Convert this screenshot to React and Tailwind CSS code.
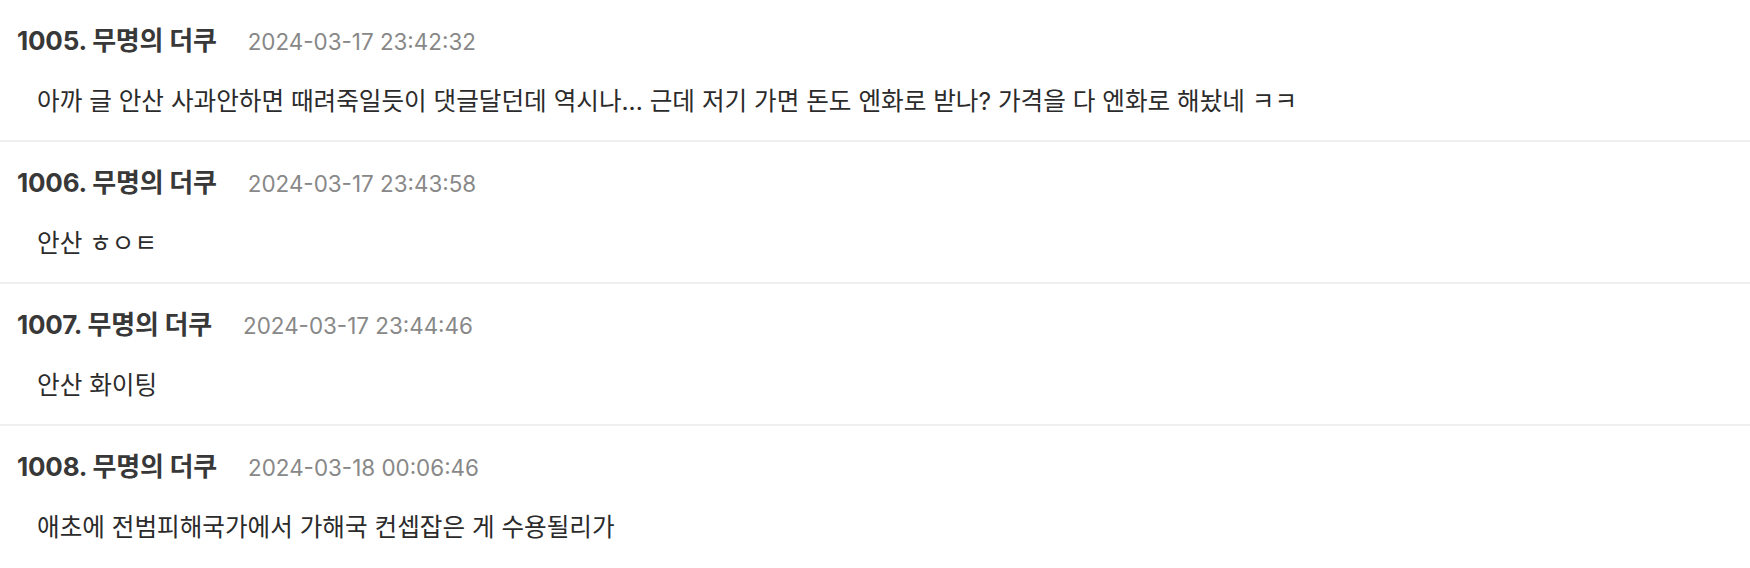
import React from "react";

const rows = [
  {
    no: "1005.",
    time: "2024-03-17 23:42:32",
    text: "아까 글 안산 사과안하면 때려죽일듯이 댓글달던데 역시나... 근데 저기 가면 돈도 엔화로 받나? 가격을 다 엔화로 해놨네 ㅋㅋ",
  },
  { no: "1006.", time: "2024-03-17 23:43:58", text: "안산 ㅎㅇㅌ" },
  { no: "1007.", time: "2024-03-17 23:44:46", text: "안산 화이팅" },
  { no: "1008.", time: "2024-03-18 00:06:46", text: "애초에 전범피해국가에서 가해국 컨셉잡은 게 수용될리가" },
];

export default function App() {
  return (
    <div
      className="w-[1750px] h-[568px] bg-white overflow-hidden"
      style={{ fontFamily: 'Inter, "Noto Sans CJK KR", sans-serif' }}
    >
      {rows.map((r, i) => (
        <div
          key={r.no}
          className={
            "pl-[17px] pt-[25px] pb-[23px] " +
            (i < rows.length - 1 ? "border-b-2 border-[#efefef]" : "")
          }
        >
          <div className="flex items-baseline h-[32px] leading-[32px]">
            <span className="text-[26px] font-bold text-[#383838] tracking-[-0.2px]">
              {r.no} 무명의 더쿠
            </span>
            <span className="ml-[31px] text-[22.4px] text-[#888888]">{r.time}</span>
          </div>
          <div className="mt-[28px] pl-[20px] h-[32px] leading-[32px] text-[24.6px] text-[#2b2b2b] whitespace-nowrap">
            {r.text}
          </div>
        </div>
      ))}
    </div>
  );
}
